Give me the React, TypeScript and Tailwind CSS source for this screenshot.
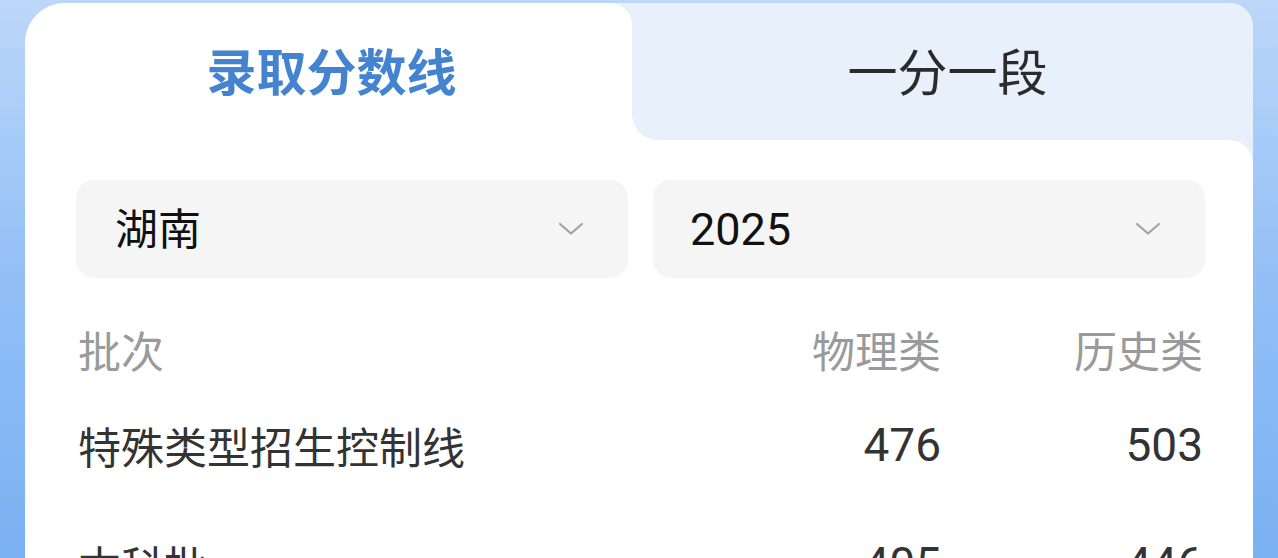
import React from "react";

const Chevron = () => (
  <svg width="26" height="14" viewBox="0 0 26 14" fill="none">
    <polyline points="2,2 13,11.5 24,2" stroke="#a3a3a3" strokeWidth="2.2" strokeLinecap="round" strokeLinejoin="round" />
  </svg>
);

const rows = [
  { name: "特殊类型招生控制线", phy: "476", his: "503" },
  { name: "本科批", phy: "405", his: "446" },
];

export default function App() {
  const cjk = { fontFamily: '"Noto Sans CJK SC", "Noto Sans", sans-serif' };
  const num = { fontFamily: 'Roboto, "Noto Sans", sans-serif' };
  return (
    <div className="w-[1278px] h-[558px] overflow-hidden bg-gradient-to-b from-[#bcd7f8] via-[#92bff6] to-[#7ab1f3] pt-[3px] px-[25px]" style={cjk}>
      <div className="w-full h-[600px] rounded-tl-[40px] rounded-tr-[24px] overflow-hidden bg-[#e8f0fc] flex flex-col">
        <div className="flex h-[137px] shrink-0">
          <div className="w-[607px] bg-white rounded-tr-[22px] flex items-center justify-center pl-[6px] pb-[6px]">
            <span className="text-[50px] font-semibold text-[#4483d0] leading-none">录取分数线</span>
          </div>
          <div className="flex-1 bg-white">
            <div className="h-full bg-[#e8f0fc] rounded-bl-[26px] flex items-center justify-center pl-[10px] pb-[6px]">
              <span className="text-[50px] text-[#2b2b2b] leading-none">一分一段</span>
            </div>
          </div>
        </div>
        <div className="flex-1 bg-white rounded-tr-[24px] pl-[51px] pr-[48px] pt-[40px]">
          <div className="grid grid-cols-2 gap-[25px]">
            <div className="h-[98px] bg-[#f5f5f5] rounded-[18px] flex items-center justify-between pl-[39px] pr-[44px]">
              <span className="text-[43px] text-[#111] leading-none -mt-[6px]">湖南</span>
              <Chevron />
            </div>
            <div className="h-[98px] bg-[#f5f5f5] rounded-[18px] flex items-center justify-between pl-[37px] pr-[44px]">
              <span className="text-[45px] text-[#111] leading-none" style={num}>2025</span>
              <Chevron />
            </div>
          </div>
          <div className="px-[2px] mt-[41px]">
            <div className="flex items-center h-[60px] text-[43px] text-[#9a9a9a]">
              <div className="flex-1">批次</div>
              <div className="w-[200px] text-right">物理类</div>
              <div className="w-[262px] text-right">历史类</div>
            </div>
            {rows.map((r, i) => (
              <div key={r.name} className={`flex items-center h-[60px] text-[#333] ${i === 0 ? "mt-[36px]" : "mt-[59px]"}`}>
                <div className="flex-1 text-[43px]">{r.name}</div>
                <div className="w-[200px] text-right text-[46px]" style={num}>{r.phy}</div>
                <div className="w-[262px] text-right text-[46px]" style={num}>{r.his}</div>
              </div>
            ))}
          </div>
        </div>
      </div>
    </div>
  );
}
